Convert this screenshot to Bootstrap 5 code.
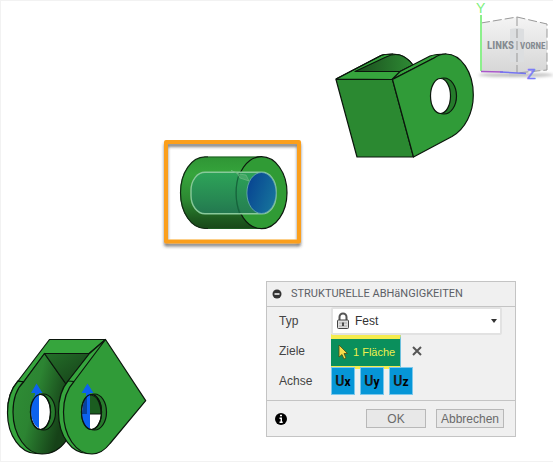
<!DOCTYPE html>
<html lang="de">
<head>
<meta charset="utf-8">
<meta name="viewport" content="width=device-width, initial-scale=1">
<title>Strukturelle Abhängigkeiten</title>
<link href="https://cdn.jsdelivr.net/npm/bootstrap@5.3.0/dist/css/bootstrap.min.css" rel="stylesheet">
<style>
body{font-family:"Liberation Sans",Arial,sans-serif;font-size:12px;line-height:16px;color:#444;background:#fff}
.viewport{border:1px solid #f2f2f2;border-right:0}
.model{position:absolute;stroke-linejoin:round;overflow:visible}
.clevis-top{left:334px;top:51px}
.pin-model{left:159px;top:135px}
.clevis-bottom{left:4px;top:334px}
.view-cube{left:469px;top:0}
.view-cube text{font-family:"Liberation Sans",sans-serif}
.view-cube .face text{font-family:"Liberation Sans Narrow","Roboto Condensed",Roboto,sans-serif}
.panel{position:absolute;left:265px;top:280px;width:250px;background:#f0f0f0;border:1px solid #c4c4c4}
.panel-head{height:25px;color:#5c5f66;border-bottom:1px solid #c4c4c4}
.panel-head h1{font-family:Roboto,sans-serif;font-size:11px;line-height:16px;font-weight:400}
.fields{display:grid;grid-template-columns:52px 1fr;row-gap:2px;padding:0 12px 5px}
.fields .tall{height:28px}
.type-box{position:relative;height:28px;margin-right:1px}
.type-box select{height:28px;width:100%;border:2px solid #e2e2e2;background:#fff;border-radius:2px;appearance:none;padding:0 20px 0 22px;font-size:12px;color:#333}
.type-box svg{position:absolute;top:0;pointer-events:none}
.type-box .lock{left:4px}
.type-box .caret{right:4px}
.target{height:35px;width:70px;background:#0a8f5c;border:0;border-top:5px solid #f5ec4e;border-bottom:3px solid #f5ec4e;border-right:1px solid #6cc0dd;color:#eef04e;font-size:11px;padding:0 0 0 6px}
.clear{border:0;background:none;padding:0;width:12px;height:16px;line-height:0;margin-left:10px}
.axes{gap:5px}
.axis{width:24px;height:28px;background:#0696d7;border:1px solid #7cc8ec;color:#1a1a1a;font:bold 14px/24px Roboto,sans-serif;padding:0}
.axis span{font-size:12px;color:#000}
.panel-foot{height:36px;border-top:1px solid #c4c4c4;padding:0 11px 0 8px}
.action{height:19px;border:1px solid #b8b8b8;background:#e8e8e8;color:#6a6a6a;font-size:12px;line-height:16px;padding:0;width:60px;margin-right:10px}
.action.wide{width:68px;margin-right:0}
</style>
<script src="https://cdn.jsdelivr.net/npm/bootstrap@5.3.0/dist/js/bootstrap.bundle.min.js"></script>
</head>
<body>
<main class="viewport position-relative vh-100 overflow-hidden">

<svg class="model clevis-top" width="142" height="110" viewBox="335 52 142 110" fill="none" stroke="#0b160c" stroke-width="1.2" aria-hidden="true">
<defs><linearGradient id="pocket" x1="0" x2="1"><stop offset="0" stop-color="#1a4d1d"/><stop offset="1" stop-color="#2e8b34"/></linearGradient></defs>
<path fill="#36a53d" d="M336 79L381 55.500C385 54 389 54 393 54C401 54 408 58 413 65L392 79.500Z"/>
<path fill="url(#pocket)" d="M355 71.500L386 57C391 54.500 396 54 400 55C406 57 410 61 413 65L400 71.500Z"/>
<path d="M336 79L381 55.500C385 54 389 54 393 54"/>
<path fill="#36a53d" d="M392 79.500L400 71.500L430 56C436 54 441 54 446 54L433 58.500Z"/>
<path fill="#2b8931" d="M336 79.500H392.500L413.500 157H357Z"/>
<path fill="#309b38" d="M392.500 79.500L434 58C438 55 442 54 446 54C461 54 473.300 72 473.300 95C473.300 113 465 129 452 136.500L413.500 157Z"/>
<ellipse cx="444" cy="96" rx="12.500" ry="18" fill="#257b2b"/>
<ellipse cx="440.500" cy="96" rx="10" ry="17.500" fill="#fff"/>
</svg>

<svg class="model pin-model" width="148" height="116" viewBox="160 136 148 116" fill="none" aria-hidden="true">
<defs>
<linearGradient id="barrel" x1="0" y1="0" x2="0" y2="1"><stop offset="0" stop-color="#2f9535"/><stop offset=".25" stop-color="#36a53c"/><stop offset=".6" stop-color="#2c8831"/><stop offset=".85" stop-color="#1e5c20"/><stop offset="1" stop-color="#184719"/></linearGradient>
<linearGradient id="bore" x1="0" x2="1" y2=".5"><stop offset="0" stop-color="#063f91"/><stop offset="1" stop-color="#15709b"/></linearGradient>
<linearGradient id="glass" x1="0" y1="0" x2="0" y2="1"><stop offset="0" stop-color="#2ca35c"/><stop offset="1" stop-color="#237a55"/></linearGradient>
<filter id="drop" x="-10%" y="-10%" width="120%" height="125%"><feDropShadow dx="0" dy="3" stdDeviation="1.500" flood-color="#333" flood-opacity=".6"/></filter>
</defs>
<rect x="166" y="142" width="133" height="99.500" stroke="#fb9f1c" stroke-width="4" filter="url(#drop)"/>
<path fill="url(#barrel)" d="M205 156.700A25 36 0 0 0 205 228.700H262V156.700Z"/>
<path stroke="#1e5c22" d="M208 157H262M208 228.500H262"/>
<path stroke="#122914" stroke-width="1.200" d="M208 156.900H205A24.500 35.800 0 0 0 205 228.500H208"/>
<ellipse cx="261.500" cy="192.700" rx="25.500" ry="36" fill="#309b35" stroke="#0c180d" stroke-width="1.200"/>
<rect x="191" y="172.300" width="85" height="41.500" rx="14" ry="18" fill="url(#glass)" fill-opacity=".88" stroke="#88c99a" stroke-width="1.400"/>
<path d="M239.500 173C235 185 235 201 239.500 213" stroke="#16643b" stroke-width="1.200"/>
<ellipse cx="261.500" cy="193" rx="14.600" ry="20.500" fill="url(#bore)" stroke="#6faeb4" stroke-width=".8"/>
<path fill="#78bd88" fill-opacity=".35" stroke="#78bd88" stroke-opacity=".6" d="M231 170.500L237 173L240 178L249 181L246 175L239 174Z"/>
</svg>

<svg class="model clevis-bottom" width="146" height="122" viewBox="5 335 146 122" fill="none" stroke="#0b160c" stroke-width="1.200" aria-hidden="true">
<defs><linearGradient id="plate" x1="0" y1="0" x2="1" y2=".5"><stop offset="0" stop-color="#2f9036"/><stop offset=".5" stop-color="#2c8432"/><stop offset="1" stop-color="#164218"/></linearGradient>
<linearGradient id="web" x1="0" x2="1" y2="1"><stop offset="0" stop-color="#246f29"/><stop offset="1" stop-color="#153f18"/></linearGradient></defs>
<path fill="#36a53d" d="M49.500 339.500H105.500L89 353.500H44.500L22 384L14 402L7.500 412C7.500 400 11 389 18 381Z"/>
<path fill="#36a53d" d="M18 381C10 390 7.500 401 7.500 413C7.500 436 21 453.500 36 453.500H41L24 382Z"/>
<path fill="url(#plate)" d="M44.500 353.500L24 381.500C16 389 13 400 13 412C13 436 27 454 42 454C54 454 61 448 66 441V384Z"/>
<path fill="url(#web)" d="M44.500 353.500H89.500L66 384Z"/>
<path d="M18 381L24 382"/>
<ellipse cx="43.500" cy="412" rx="12" ry="18" fill="#277a2c"/>
<ellipse cx="40.500" cy="412" rx="10" ry="17.500" fill="#fff"/>
<path fill="#36a53d" d="M105.500 339.500L89.500 353.500L68 381C61 389 58.500 400 58.500 412C58.500 437 72 453.500 88 453.500H93L80 382Z"/>
<path fill="#309b38" d="M105.500 339.500L145.700 400.700L110 443.500C105 450 99 454 92 454C76 454 63.500 436 63.500 412C63.500 399 68 388 74 381.500Z"/>
<path d="M68 381L74 381.500"/>
<ellipse cx="94.500" cy="412" rx="12" ry="18" fill="#277a2c"/>
<ellipse cx="91.500" cy="412" rx="10" ry="17.500" fill="#fff"/>
<path fill="#1b5d20" d="M90 395C97 395 101 403 101 414H89V395Z"/>
<g fill="#0c62ee" stroke="none">
<path d="M36.500 383.500L42.500 393H39V428C34 426 31 419 31 411C31 404 33 398 35 395V393H31Z"/>
<path d="M87.500 383.500L93.500 393H90V396H86V393H81.500Z"/>
<path d="M82 414H86V395H90V429C85 428 82 421 82 414Z"/>
</g>
<path fill="#07419a" stroke="none" d="M87 396V414H82C82 406 84 399 87 396Z"/>
<ellipse cx="40.500" cy="412" rx="10" ry="17.500"/>
<ellipse cx="91.500" cy="412" rx="10" ry="17.500"/>
</svg>

<svg class="model view-cube" width="84" height="86" viewBox="470 1 84 86" fill="none" role="img" aria-label="ViewCube">
<defs><linearGradient id="cube" x1="0" y1="0" x2="0" y2="1"><stop offset="0" stop-color="#f4f4f4"/><stop offset="1" stop-color="#d6d6d6"/></linearGradient>
<filter id="soft" x="-20%" y="-100%" width="140%" height="300%"><feGaussianBlur stdDeviation="1.500"/></filter></defs>
<ellipse cx="516" cy="75" rx="38" ry="2" fill="#bbb" filter="url(#soft)"/>
<path fill="url(#cube)" d="M481 23L517 17L547 24V70L517 73L481 71Z"/>
<path fill="#dcdee0" d="M510 29L517 28L524 29V62H510Z"/>
<path stroke="#999" stroke-dasharray="9 3" d="M481 23L517 17L547 24V70L517 73M517 17V73"/>
<path stroke="#8cf08c" stroke-width="2" d="M481 15V71"/>
<path stroke="#a957c9" stroke-width="1.500" d="M481 71.500L503 72"/>
<path stroke="#7474f2" stroke-width="1.500" d="M500 72L526 73.500"/>
<g font-size="14"><text x="476" y="13" fill="#7df07d">Y</text><text x="527" y="79" fill="#7c7cf8" stroke="#7c7cf8" stroke-width=".5">Z</text></g>
<g class="face" fill="#858b91" font-weight="bold"><text x="487" y="49" font-size="11">LINKS</text><text x="520" y="49" font-size="9">VORNE</text></g>
</svg>

<section class="panel" aria-labelledby="dialog-title">
<header class="panel-head d-flex align-items-center">
<svg class="ms-1 me-2" width="12" height="12" viewBox="0 0 12 12" aria-hidden="true"><circle cx="6" cy="6" r="4.500" fill="#333"/><path d="M3.500 6H8.500" stroke="#fff" stroke-width="1.500"/></svg>
<h1 class="m-0" id="dialog-title">STRUKTURELLE ABHäNGIGKEITEN</h1>
</header>
<div class="fields align-items-center">
<label for="type">Typ</label>
<div class="type-box">
<select id="type"><option>Fest</option></select>
<svg class="lock" width="16" height="28" viewBox="0 0 16 28" aria-hidden="true"><path d="M4.500 13V10a3.500 3.500 0 0 1 7 0V13" fill="none" stroke="#555" stroke-width="2"/><rect x="2.500" y="13" width="11" height="8.500" rx="1" fill="#ddd" stroke="#444"/><path d="M4 16H12M4 19H12" stroke="#aaa"/><path d="M8 15.500V19" stroke="#222" stroke-width="1.500"/></svg>
<svg class="caret" width="8" height="28" viewBox="0 0 8 28" aria-hidden="true"><path d="M1 12H7L4 16Z" fill="#333"/></svg>
</div>
<span>Ziele</span>
<div class="d-flex align-items-center tall">
<button class="target d-flex align-items-center flex-shrink-0" type="button"><svg class="me-1" width="12" height="16" viewBox="0 0 12 16" aria-hidden="true"><path d="M2 1V13L5 10.500L7 15L9 14L7 9.500H10.500Z" fill="#f5dd4b" stroke="#4b4b14" stroke-width=".8"/></svg>1 Fläche</button>
<button class="clear" type="button" aria-label="Auswahl entfernen"><svg width="12" height="16" viewBox="0 0 12 16"><path d="M2 4L10 12M10 4L2 12" stroke="#555" stroke-width="2"/></svg></button>
</div>
<span>Achse</span>
<div class="d-flex tall axes" role="group" aria-label="Achse">
<button class="axis" type="button">U<span>x</span></button>
<button class="axis" type="button">U<span>y</span></button>
<button class="axis" type="button">U<span>z</span></button>
</div>
</div>
<footer class="panel-foot d-flex align-items-center">
<svg width="12" height="12" viewBox="0 0 12 12" role="img" aria-label="Info"><circle cx="6" cy="6" r="6" fill="#000"/><path d="M5 2.500H7M4.500 5.300H6.300V9M4.500 9.200H7.700" stroke="#fff" stroke-width="1.400" fill="none"/></svg>
<button class="action ms-auto" type="button">OK</button>
<button class="action wide" type="button">Abbrechen</button>
</footer>
</section>
</main>
</body>
</html>
